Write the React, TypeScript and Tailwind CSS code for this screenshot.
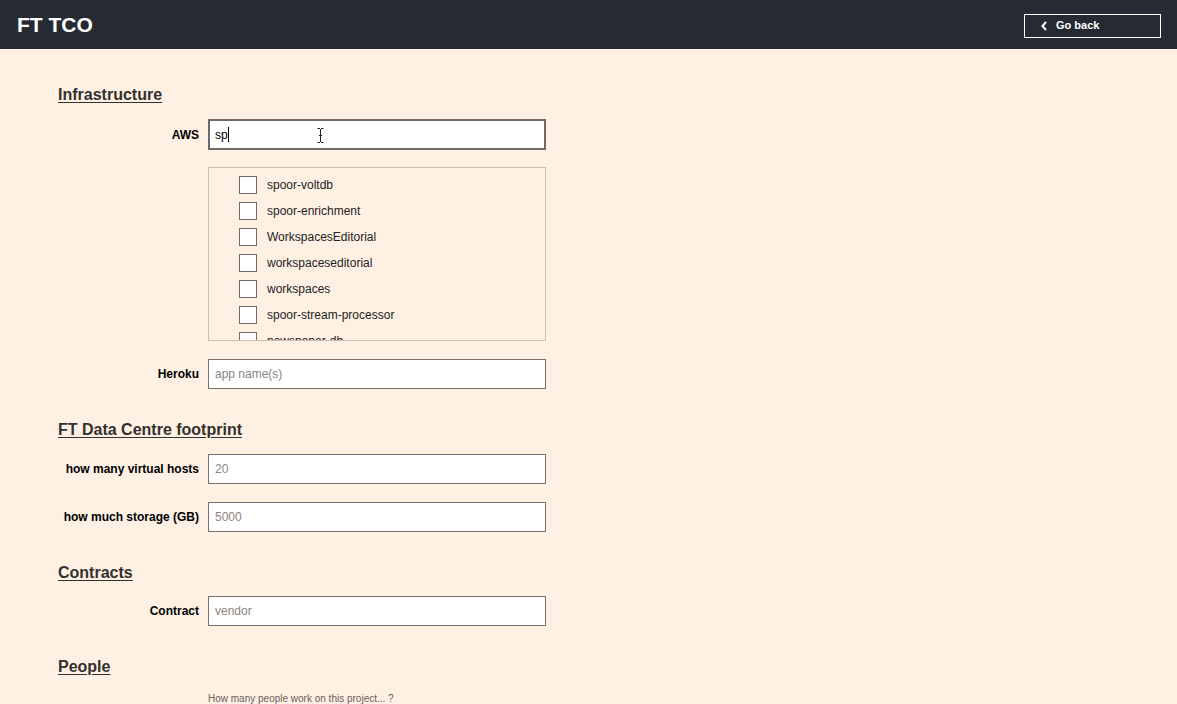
const awsApps = [
  "spoor-voltdb",
  "spoor-enrichment",
  "WorkspacesEditorial",
  "workspaceseditorial",
  "workspaces",
  "spoor-stream-processor",
  "newspaper-db",
];

function Heading({ children, className = "" }: { children: React.ReactNode; className?: string }) {
  return (
    <h2 className={`text-[16px] leading-[18px] font-bold text-[#33302e] underline underline-offset-2 ${className}`}>
      {children}
    </h2>
  );
}

function Field({ label, placeholder, className = "" }: { label: string; placeholder: string; className?: string }) {
  return (
    <div className={`flex items-center gap-[9px] ${className}`}>
      <label className="w-[141px] text-right text-[12px] font-bold text-black">{label}</label>
      <input
        placeholder={placeholder}
        className="w-[338px] h-[30px] bg-white border border-[#77706b] px-[6px] text-[12px] text-black placeholder:text-[#8a8580] outline-none"
      />
    </div>
  );
}

export default function App() {
  return (
    <div className="min-h-[704px] bg-[#fff0e4] font-['Liberation_Sans',Arial,sans-serif]">
      <header className="h-[49px] bg-[#262a33] flex items-center justify-between pl-[17px] pr-[16px]">
        <h1 className="text-white text-[21px] font-bold">FT TCO</h1>
        <button className="mt-[2px] w-[137px] h-[24px] border border-white flex items-center pl-[15px] gap-[8px] text-white text-[11px] font-bold">
          <svg width="8" height="10" viewBox="0 0 8 10" fill="none">
            <path d="M6 1L2.5 5L6 9" stroke="white" strokeWidth="2" />
          </svg>
          Go back
        </button>
      </header>

      <main className="px-[58px] flex flex-col">
        <Heading className="mt-[37px]">Infrastructure</Heading>

        <div className="flex items-center gap-[9px] mt-[15px]">
          <label className="w-[141px] text-right text-[12px] font-bold text-black">AWS</label>
          <div className="relative w-[338px] h-[31px] bg-white border-2 border-[#6e6a66] flex items-center px-[5px] text-[12px] text-black">
            sp<span className="inline-block w-px h-[15px] bg-black" />
            <svg className="absolute left-[107px] top-[7px]" width="7" height="15" viewBox="0 0 7 15" fill="none">
              <path d="M0.5 0.5h2.5M4 0.5h2.5M3.5 1v13M0.5 14.5h2.5M4 14.5h2.5M2 7.5h3" stroke="#222" strokeWidth="1" />
            </svg>
          </div>
        </div>

        <div className="ml-[150px] mt-[17px] w-[338px] h-[174px] border border-[#cdbfb2] overflow-hidden pt-[4px]">
          {awsApps.map((app) => (
            <div key={app} className="flex items-center h-[26px] pl-[30px] gap-[10px]">
              <span className="w-[18px] h-[18px] bg-white border border-[#6e6a66]" />
              <span className="text-[12px] text-[#222]">{app}</span>
            </div>
          ))}
        </div>

        <Field label="Heroku" placeholder="app name(s)" className="mt-[18px]" />

        <Heading className="mt-[32px]">FT Data Centre footprint</Heading>
        <Field label="how many virtual hosts" placeholder="20" className="mt-[15px]" />
        <Field label="how much storage (GB)" placeholder="5000" className="mt-[18px]" />

        <Heading className="mt-[32px]">Contracts</Heading>
        <Field label="Contract" placeholder="vendor" className="mt-[14px]" />

        <Heading className="mt-[32px]">People</Heading>
        <p className="ml-[150px] mt-[15px] text-[10px] text-[#66605b]">How many people work on this project... ?</p>
      </main>
    </div>
  );
}
